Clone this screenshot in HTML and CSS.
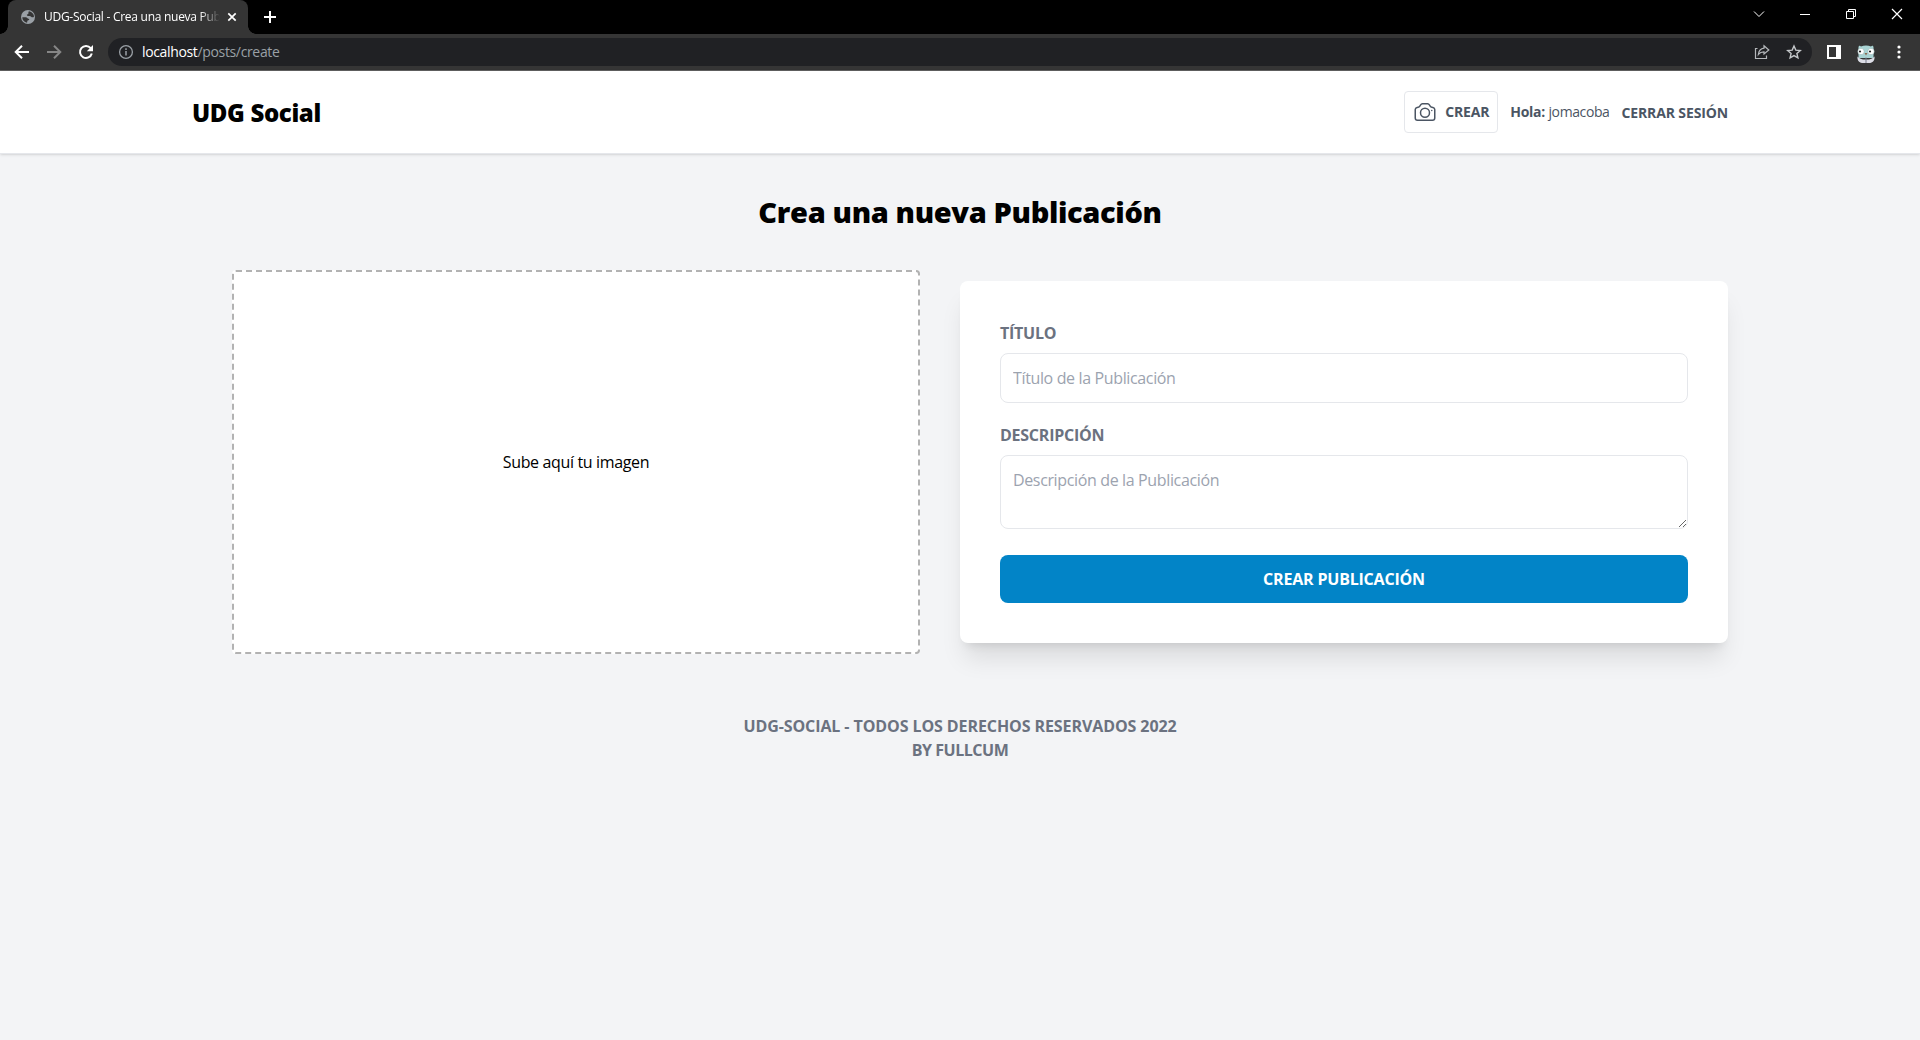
FILE: index.html
```html
<!DOCTYPE html>
<html lang="es">
<head>
<meta charset="utf-8">
<title>UDG-Social - Crea una nueva Publicación</title>
<link rel="stylesheet" href="styles.css">
</head>
<body>
<div class="browser">
  <div class="tabstrip">
    <div class="tab">
      <svg class="favicon" width="16" height="16" viewBox="0 0 16 16"><circle cx="8" cy="8" r="7" fill="#9aa0a6"/><path d="M2.300 8.200h3.600c1 0 1.400.9 2 1.200.8.300 1.500.5 1.400 1.200-.1.700-1.800.7-2 1.400-.1.600.1 1.300-.3 1.700C4.200 13.200 2.200 11 2.300 8.200zM9 2.200c2.200.4 3.700 1.700 4.500 3.300.4.900.5 1.700.4 2.500-1 .5-1.900.5-2.500-.1-.6-.7-1.500-.8-2.500-.8-1.300 0-2.200-.5-2-1.300.1-.7 1.400-.6 1.500-1.300.1-.8-.2-1.800.6-2.300z" fill="#353535"/></svg>
      <span class="tab-title">UDG-Social - Crea una nueva Publicación</span>
      <svg class="tab-close" width="10" height="10" viewBox="0 0 10 10"><path d="M1.300 1.300l7.400 7.400M8.700 1.300L1.300 8.700" stroke="#fff" stroke-width="1.700"/></svg>
    </div>
    <svg class="new-tab" width="12" height="12" viewBox="0 0 12 12"><path d="M6 0v12M0 6h12" stroke="#fff" stroke-width="2"/></svg>
    <div class="window-buttons">
      <svg width="12" height="12" viewBox="0 0 12 12"><path d="M1 3.500l5 5 5-5" fill="none" stroke="#fff"/></svg>
      <svg width="12" height="12" viewBox="0 0 12 12"><path d="M1 6.500h10" stroke="#fff"/></svg>
      <svg width="12" height="12" viewBox="0 0 12 12"><path d="M1.500 3.500h7v7h-7zM3.500 3.500v-2h7v7h-2" fill="none" stroke="#fff"/></svg>
      <svg width="12" height="12" viewBox="0 0 12 12"><path d="M1 1l10 10M11 1L1 11" stroke="#fff" stroke-width="1.200"/></svg>
    </div>
  </div>
  <div class="toolbar">
    <svg class="nav" width="16" height="16" viewBox="0 0 16 16"><path d="M15 8H2.500M8 1.700L1.700 8 8 14.300" fill="none" stroke="#fff" stroke-width="2"/></svg>
    <svg class="nav" width="16" height="16" viewBox="0 0 16 16"><path d="M1 8h12.500M8 1.700L14.300 8 8 14.300" fill="none" stroke="#868686" stroke-width="2"/></svg>
    <svg class="nav" width="16" height="16" viewBox="0 0 16 16"><path d="M13.800 9.500A6 6 0 1 1 12.700 4.200" fill="none" stroke="#fff" stroke-width="2"/><path d="M15 1v6.200H8.800z" fill="#fff"/></svg>
    <div class="omnibox">
      <svg width="16" height="16" viewBox="0 0 16 16"><circle cx="8" cy="8" r="6.400" fill="none" stroke="#9aa0a6" stroke-width="1.300"/><path d="M8 7v4.500M8 4.300v1.600" stroke="#9aa0a6" stroke-width="1.500"/></svg>
      <span class="url"><span class="host">localhost</span><span class="path">/posts/create</span></span>
      <svg class="share" width="16" height="16" viewBox="0 0 16 16"><path d="M3.500 4.500H1.500v10h11v-3" fill="none" stroke="#b5b8bb" stroke-width="1.200"/><path d="M10 1.800l4.800 4.200L10 10V7.800c-2.600 0-4.300.8-5.600 2.500.4-3.300 2.300-5.700 5.600-6.100z" fill="none" stroke="#b5b8bb" stroke-width="1.200"/></svg>
      <svg class="star" width="16" height="16" viewBox="0 0 16 16"><path d="M8 2l1.800 4.100 4.500.4-3.400 3 1 4.400L8 11.600l-3.900 2.300 1-4.400-3.400-3 4.500-.4z" fill="none" stroke="#c4c7ca" stroke-width="1.400"/></svg>
    </div>
    <svg class="panel" width="14" height="14" viewBox="0 0 14 14"><path fill="#fff" fill-rule="evenodd" d="M0 0h14v14H0zM2 2v10h7V2z"/></svg>
    <svg class="avatar" width="18" height="18" viewBox="0 0 18 18"><path d="M1.500 2.500C1.500.5 3 .5 4 1.500c3-1.500 7-1.500 10 0 1-1 2.500-1 2.500 1V13h-15z" fill="#a9d3d3"/><path d="M.5 11.500c2 2 3 2.500 5.500 3h6c2.500-.5 3.500-1 5.500-3 .5 3.500-1.500 6-4.500 6.500H5C2 17.500 0 15 .5 11.500z" fill="#dcdde6"/><path d="M9 12.500V18" stroke="#777a8c"/><circle cx="4" cy="6.500" r="3.200" fill="#fff" stroke="#8aa" stroke-width=".5"/><circle cx="14" cy="6.500" r="3.200" fill="#fff" stroke="#8aa" stroke-width=".5"/><circle cx="3" cy="6.500" r="1.100" fill="#222"/><circle cx="13" cy="6.500" r="1.100" fill="#222"/><path d="M7.500 8h3L9 10.500z" fill="#8a6a52"/></svg>
    <svg class="menu" width="4" height="14" viewBox="0 0 4 14"><g fill="#fff"><circle cx="2" cy="2" r="1.600"/><circle cx="2" cy="7" r="1.600"/><circle cx="2" cy="12" r="1.600"/></g></svg>
  </div>
</div>
<header class="site-header">
  <h1 class="brand">UDG Social</h1>
  <nav class="site-nav">
    <a class="create"><svg width="24" height="24" viewBox="0 0 24 24" fill="none" stroke="#4b5563" stroke-width="1.500" stroke-linecap="round" stroke-linejoin="round"><path d="M6.827 6.175A2.310 2.310 0 0 1 5.186 7.230c-.38.054-.757.112-1.134.175C2.999 7.580 2.250 8.507 2.250 9.574V18a2.250 2.250 0 0 0 2.250 2.250h15A2.250 2.250 0 0 0 21.750 18V9.574c0-1.067-.75-1.994-1.802-2.169a47.865 47.865 0 0 0-1.134-.175 2.310 2.310 0 0 1-1.640-1.055l-.822-1.316a2.192 2.192 0 0 0-1.736-1.039 48.774 48.774 0 0 0-5.232 0 2.192 2.192 0 0 0-1.736 1.039l-.821 1.316z"/><path d="M16.500 12.750a4.500 4.500 0 1 1-9 0 4.500 4.500 0 0 1 9 0zM18.750 10.500h.008v.008h-.008V10.500z"/></svg><span class="create-text">Crear</span></a>
    <a class="user"><b class="hello">Hola:</b> <span class="username">jomacoba</span></a>
    <a class="logout">Cerrar Sesión</a>
  </nav>
</header>
<main class="content">
  <h2 class="page-title">Crea una nueva Publicación</h2>
  <div class="columns">
    <div class="upload-col"><div class="dropzone"><span class="drop-text">Sube aquí tu imagen</span></div></div>
    <form class="card">
      <div class="field"><label class="label" for="titulo">Título</label><input class="control" id="titulo" type="text" placeholder="Título de la Publicación"></div>
      <div class="field"><label class="label" for="descripcion">Descripción</label><textarea class="control" id="descripcion" placeholder="Descripción de la Publicación"></textarea></div>
      <button class="submit" type="button">Crear Publicación</button>
    </form>
  </div>
</main>
<footer class="site-footer"><div class="rights">UDG-Social - Todos los derechos reservados 2022</div><div class="author">By FullCum</div></footer>
</body>
</html>
```
FILE: styles.css
```css
* { box-sizing: border-box; }
body { margin: 0; height: 1040px; overflow: hidden; background: #f3f4f6; color: #000; font: 16px/24px "Open Sans", "Noto Sans", sans-serif; }
h1, h2 { margin: 0; }
svg { display: block; flex: none; }

/* Browser window */
.browser { height: 71px; background: #353535; border-bottom: 1px solid #5f5f5f; }
.tabstrip { height: 34px; display: flex; align-items: center; background: #000; padding-left: 8px; }
.tab { position: relative; width: 240px; height: 34px; padding: 0 11px 0 12px; display: flex; align-items: center; background: #353535; border-radius: 8px 8px 0 0; color: #fff; font-size: 12px; }
.tab::before, .tab::after { content: ""; position: absolute; bottom: 0; width: 8px; height: 8px; }
.tab::before { left: -8px; background: radial-gradient(circle at 0 0, transparent 7.5px, #353535 8px); }
.tab::after { right: -8px; background: radial-gradient(circle at 100% 0, transparent 7.5px, #353535 8px); }
.tab-title { width: 176px; margin-left: 8px; overflow: hidden; white-space: nowrap; letter-spacing: -0.27px; -webkit-mask-image: linear-gradient(90deg, #000 156px, transparent 176px); }
.tab-close { margin-left: 7px; }
.new-tab { margin-left: 16px; }
.window-buttons { display: flex; gap: 34px; margin-left: auto; padding-right: 17px; margin-top: -6px; }
.toolbar { height: 36px; display: flex; align-items: center; padding-left: 14px; }
.nav { margin-right: 16px; }
.omnibox { width: 1704px; height: 28px; margin-left: -2px; border-radius: 14px; background: #202124; display: flex; align-items: center; padding: 0 10px; font-size: 14px; }
.url { margin-left: 8px; margin-right: auto; white-space: nowrap; letter-spacing: -0.35px; }
.host { color: #fff; }
.path { color: #9aa0a6; }
.share { margin-right: 16px; }
.panel { margin-left: 15px; }
.avatar { margin-left: 16px; margin-top: 4px; }
.menu { margin-left: 22px; }

/* Site header */
.site-header { height: 83px; padding: 20px 192px; display: flex; align-items: center; justify-content: space-between; background: #fff; border-bottom: 1px solid #e5e7eb; box-shadow: 0 1px 3px rgb(0 0 0 / .1), 0 1px 2px -1px rgb(0 0 0 / .1); }
.brand { padding-top: 2px; font-size: 24px; line-height: 36px; font-weight: 800; letter-spacing: -0.35px; }
.site-nav { display: flex; align-items: center; gap: 12px; color: #4b5563; font-size: 14px; line-height: 20px; }
.create { display: flex; align-items: center; gap: 8px; height: 42px; width: 94px; padding: 8px; border: 1px solid #e5e7eb; border-radius: 4px; text-transform: uppercase; font-weight: 700; letter-spacing: -0.15px; }
.user { white-space: nowrap; }
.hello { letter-spacing: -0.3px; }
.username { letter-spacing: -0.4px; }
.logout { padding-top: 2px; text-transform: uppercase; font-weight: 700; letter-spacing: -0.13px; }

/* Create post */
.content { padding: 40px 192px 0; }
.page-title { height: 36px; text-align: center; font-size: 29px; line-height: 36px; font-weight: 800; letter-spacing: -0.35px; margin-bottom: 40px; }
.columns { display: flex; align-items: center; }
.upload-col { width: 50%; padding: 0 40px; }
.dropzone { height: 384px; display: flex; align-items: center; justify-content: center; background: #fff; border: 2px dashed #b2b2b2; border-radius: 4px; }
.drop-text { letter-spacing: -0.35px; }
.card { width: 50%; padding: 40px; background: #fff; border-radius: 8px; box-shadow: 0 20px 25px -5px rgb(0 0 0 / .1), 0 8px 10px -6px rgb(0 0 0 / .1); }
.field { margin-bottom: 20px; }
.label { display: block; margin-bottom: 8px; color: #6b7280; font-weight: 700; text-transform: uppercase; letter-spacing: -0.25px; }
.control { width: 100%; padding: 12px; border: 1px solid #e5e7eb; border-radius: 8px; background: #fff; font: inherit; letter-spacing: -0.36px; display: block; }
input.control { height: 50px; }
textarea.control { height: 74px; margin-bottom: 26px; resize: vertical; }
.control::placeholder { color: #9ca3af; }
.submit { width: 100%; height: 48px; border: 0; border-radius: 8px; background: #0284c7; color: #fff; font: inherit; font-weight: 700; text-transform: uppercase; letter-spacing: -0.2px; }

.site-footer { margin-top: 40px; padding: 20px; text-align: center; color: #6b7280; font-weight: 700; text-transform: uppercase; }
.rights { letter-spacing: -0.09px; }
.author { letter-spacing: -0.45px; }
```
